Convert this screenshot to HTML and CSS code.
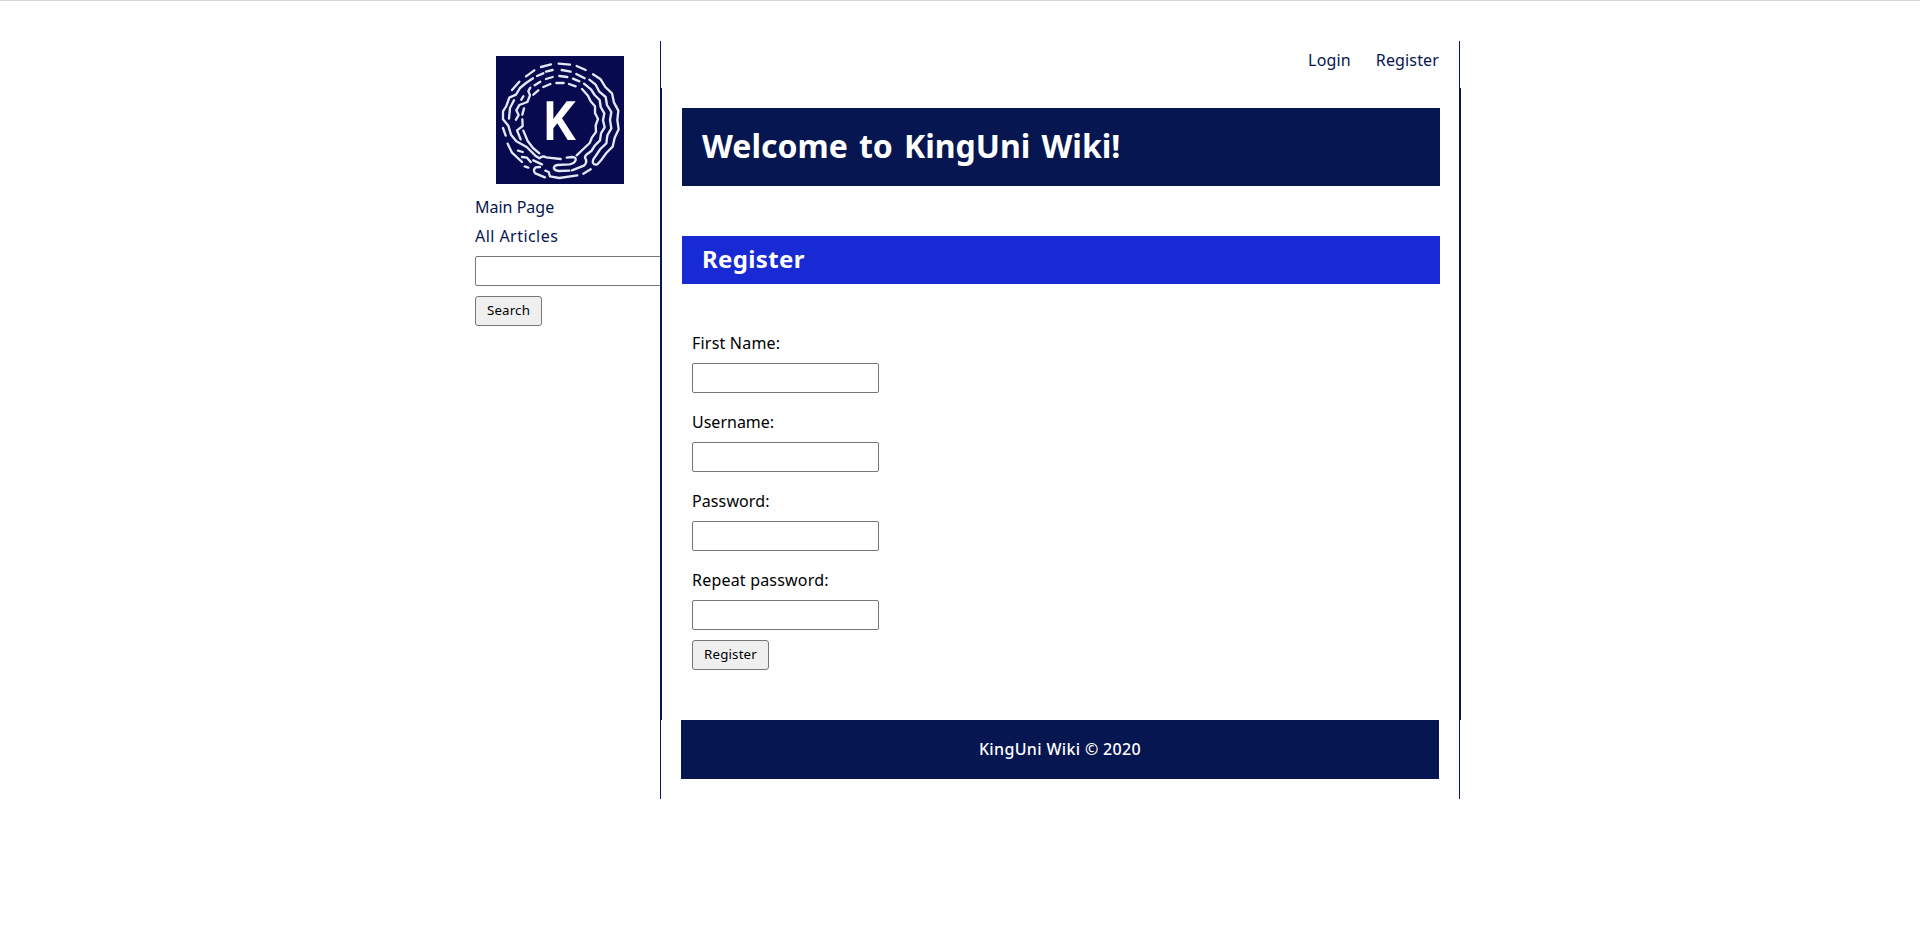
FILE: index.html
```html
<!DOCTYPE html>
<html lang="en">
<head>
<meta charset="utf-8">
<title>KingUni Wiki</title>
<link rel="stylesheet" href="styles.css">
</head>
<body>
<div class="page">
  <aside class="sidebar">
    <svg class="logo" viewBox="0 0 384 384" role="img" aria-label="KingUni logo">
      <rect width="384" height="384" fill="#070a4f"/>
      <g fill="none" stroke="#e4e7f6" stroke-width="7" stroke-linecap="round" stroke-linejoin="round">
        <path d="M48 102L70 77M90 61L115 43M135 33L165 25M188 23L222 26M242 30L269 42"/>
        <path d="M123 60L142 52M150 47L170 42M197 42L224 47M241 54L266 67"/>
        <path d="M116 88L133 77M150 69L170 63M190 60L214 63M231 68L250 76"/>
        <path d="M112 116L127 103M142 93L163 84M181 81L203 81M219 84L239 91"/>
        <path d="M291 55L314 70L328 93L348 112L354 140L367 164L364 192L368 220L356 245L350 272L331 291L315 313L305 324Q296 329 291 321Q288 313 299 300L313 279L331 262L334 238L346 217L342 192L346 168L333 147L329 123L310 107L299 86L280 71"/>
        <path d="M264 83L285 100L296 117L311 132L314 153L325 172L321 193L326 214L315 232L312 253L297 268L286 285L270 297Q264 303 270 311Q273 321 264 329L228 343"/>
        <path d="M258 99L276 119L284 136L297 151L297 171L306 189L299 208L300 228L288 244L281 261L262 279L242 298"/>
        <path d="M111 67L90 81L72 96L60 116L40 125L31 150L21 166L21 190L37 209L45 236L61 256L92 273L118 299L130 307Q140 298 150 304L194 309"/>
        <path d="M103 95L97 105L102 118L94 138L70 147L61 163L68 177L60 191M54 133L42 156L39 188M76 131L82 121M84 157L79 176M79 190L80 210L63 223L74 250M82 224L95 255L111 276L130 292"/>
        <path d="M21 216L29 239M35 263L48 290L78 318M66 284L80 288M78 303L93 305L104 318M86 331L97 335M112 313L138 325M132 333L119 334Q109 343 118 352L147 364M148 344L158 348L162 361L190 366L244 358M262 353L284 340"/>
        <path d="M212 305L229 303Q241 304 239 312Q236 323 220 325L184 327Q172 330 174 338Q178 345 190 345L220 344"/>
      </g>
      <path fill="#fff" d="M152 136H172V189L212 136H239L198 187L240 252H215L184 202L172 217V252H152Z"/>
    </svg>
    <a class="side-link main-link">Main Page</a>
    <a class="side-link articles-link">All Articles</a>
    <input class="field search-field" type="text" aria-label="Search">
    <button class="button search-button">Search</button>
  </aside>
  <div class="column">
    <nav class="topbar">
      <a>Login</a>
      <a>Register</a>
    </nav>
    <main class="content">
      <h1 class="banner">Welcome to KingUni Wiki!</h1>
      <h2 class="section-title">Register</h2>
      <form class="form">
        <label class="label label-first">First Name:</label>
        <input class="field" type="text">
        <label class="label label-user">Username:</label>
        <input class="field" type="text">
        <label class="label label-pass">Password:</label>
        <input class="field" type="password">
        <label class="label label-repeat">Repeat password:</label>
        <input class="field" type="password">
        <button class="button register-button" type="button">Register</button>
      </form>
    </main>
    <footer class="footer"><div class="footer-bar">KingUni Wiki © 2020</div></footer>
  </div>
</div>
</body>
</html>
```
FILE: styles.css
```css
* { box-sizing: border-box; }
body {
  margin: 0;
  min-height: 100vh;
  border-top: 1px solid #d5d5d5;
  background: #fefefe;
  color: #000;
  font: 16px/24px "Noto Sans", sans-serif;
}
.page {
  display: flex;
  align-items: flex-start;
  width: 986px;
  margin: 40px 0 0 475px;
}
.sidebar {
  display: flex;
  flex-direction: column;
  align-items: flex-start;
  width: 185px;
  padding-top: 15px;
  overflow: hidden;
}
.logo { width: 128px; height: 128px; margin: 0 0 11px 21px; }
.side-link { height: 29px; color: #061650; }
.articles-link { letter-spacing: 0.45px; }
.field {
  width: 187px;
  height: 30px;
  margin: 0;
  border: 1px solid #767676;
  border-radius: 2px;
  background: #fff;
}
.search-field { flex: none; margin: 3px 0 10px; }
.button {
  height: 30px;
  padding: 0 0 2px;
  border: 1px solid #767676;
  border-radius: 3px;
  background: #efefef;
  color: #000;
  font: 13.333px/20px "Noto Sans", sans-serif;
  letter-spacing: 0.15px;
}
.search-button { width: 67px; }
.column { width: 801px; }
.topbar {
  display: flex;
  justify-content: flex-end;
  gap: 25px;
  width: 800px;
  height: 47px;
  padding: 7px 20px 0 0;
  border: solid #061650;
  border-width: 0 1px;
  color: #061650;
  letter-spacing: 0.15px;
}
.content {
  height: 632px;
  padding: 20px 19px 0 20px;
  border: solid #061650;
  border-width: 0 2px;
}
.banner {
  height: 78px;
  margin: 0 0 50px;
  padding-left: 20px;
  background: #061650;
  color: #fff;
  font-size: 32px;
  line-height: 76px;
  word-spacing: 2.8px;
}
.section-title {
  height: 48px;
  margin: 0;
  padding-left: 20px;
  background: #182ad3;
  color: #fff;
  font-size: 24px;
  line-height: 46px;
  letter-spacing: 0.35px;
}
.form {
  display: flex;
  flex-direction: column;
  align-items: flex-start;
  padding: 30px 10px 0;
}
.label { height: 49px; padding-top: 17px; }
.label-first { letter-spacing: 0.2px; }
.label-pass { letter-spacing: 0.1px; }
.label-repeat { letter-spacing: 0.2px; }
.register-button { width: 77px; margin-top: 10px; }
.footer {
  width: 800px;
  height: 79px;
  padding: 0 20px;
  border: solid #061650;
  border-width: 0 1px;
}
.footer-bar {
  height: 59px;
  background: #061650;
  color: #fff;
  font-weight: 500;
  line-height: 59px;
  letter-spacing: 0.35px;
  text-align: center;
}
```
